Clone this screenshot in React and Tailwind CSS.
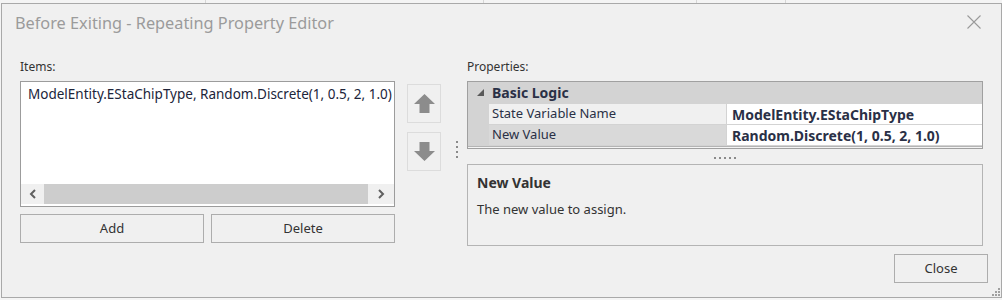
import React from 'react';

const font = { fontFamily: '"Noto Sans", "Open Sans", sans-serif' };

const UpArrow = () => (
  <svg width="21" height="19" viewBox="0 0 21 19">
    <path d="M10.5 0 L21 10 L15.5 10 L15.5 19 L5.5 19 L5.5 10 L0 10 Z" fill="#8c8c8c" />
  </svg>
);

const DownArrow = () => (
  <svg width="21" height="19" viewBox="0 0 21 19">
    <path d="M5.5 0 L15.5 0 L15.5 9 L21 9 L10.5 19 L0 9 L5.5 9 Z" fill="#8c8c8c" />
  </svg>
);

const Chevron = ({ dir }) => (
  <svg width="8" height="10" viewBox="0 0 8 10">
    <path
      d={dir === 'left' ? 'M6 1 L2 5 L6 9' : 'M2 1 L6 5 L2 9'}
      fill="none"
      stroke="#606060"
      strokeWidth="2"
    />
  </svg>
);

const Dots = ({ vertical, count }) => (
  <div className={`flex ${vertical ? 'flex-col gap-[3px]' : 'flex-row gap-[3px]'}`}>
    {Array.from({ length: count }).map((_, i) => (
      <div key={i} className="h-[2px] w-[2px] bg-[#8a8a8a]" />
    ))}
  </div>
);

const PropRow = ({ name, value, selected }) => (
  <div className="mt-[1px] flex h-[20px]">
    <div className="w-[21px]" />
    <div
      className={`flex w-[237px] items-center pl-[3px] text-[13px] text-[#2a3046] ${
        selected ? 'bg-[#d9d9d9]' : 'bg-[#f0f0f0]'
      }`}
    >
      {name}
    </div>
    <div className="ml-[1px] flex flex-1 items-center bg-white pl-[5px] text-[14px] font-bold text-[#2a3046]">
      {value}
    </div>
  </div>
);

export default function App() {
  return (
    <div className="h-[300px] w-[1002px] overflow-hidden bg-[#f4f4f4]" style={font}>
      {/* background behind the dialog */}
      <div className="flex h-[3px]">
        <div className="w-[206px] border-r border-[#d6d6d6]" />
        <div className="w-[278px] border-r border-[#d6d6d6]" />
        <div className="w-[213px] border-r border-[#d6d6d6]" />
        <div className="w-[89px] border-r border-[#d6d6d6]" />
      </div>

      <div className="relative ml-[1px] h-[295px] w-[1001px] border border-[#a9a9a9] bg-[#f0f0f0]">
        {/* Title bar */}
        <div className="flex h-[55px] items-start justify-between pl-[13px] pr-[20px] pt-[8px]">
          <span className="text-[16.3px] leading-[22px] text-[#9b9b9b]">
            Before Exiting - Repeating Property Editor
          </span>
          <svg className="mt-[3px]" width="14" height="14" viewBox="0 0 14 14">
            <path d="M0.5 0.5 L13.5 13.5 M13.5 0.5 L0.5 13.5" stroke="#9a9a9a" strokeWidth="1.1" />
          </svg>
        </div>

        {/* Body */}
        <div className="flex items-start pl-[18px]">
          {/* Items column */}
          <div className="flex w-[375px] flex-col">
            <div className="h-[16px] text-[12px] leading-[16px] text-[#333]">Items:</div>
            <div className="mt-[6px] flex h-[126px] flex-col border border-[#9c9c9c] bg-white">
              <div className="flex-1 pl-[7px] pt-[3px] text-[13.5px] leading-[18px] text-[#20243a]">
                ModelEntity.EStaChipType, Random.Discrete(1, 0.5, 2, 1.0)
              </div>
              <div className="mb-[2px] flex h-[20px] items-stretch">
                <div className="flex w-[23px] items-center justify-center bg-[#f0f0f0]">
                  <Chevron dir="left" />
                </div>
                <div className="w-[324px] bg-[#cdcdcd]" />
                <div className="flex flex-1 items-center justify-center bg-[#f0f0f0]">
                  <Chevron dir="right" />
                </div>
              </div>
            </div>
            <div className="mt-[7px] flex gap-[7px]">
              <button className="h-[29px] w-[184px] border border-[#adadad] bg-[#f0f0f0] text-[13px] text-[#333]">
                Add
              </button>
              <button className="h-[29px] w-[184px] border border-[#adadad] bg-[#f0f0f0] text-[13px] text-[#333]">
                Delete
              </button>
            </div>
          </div>

          {/* Move up / down */}
          <div className="flex w-[72px]">
            <div className="ml-[12px] flex flex-col pt-[25px]">
              <div className="flex h-[39px] w-[34px] items-center justify-center border border-[#dcdcdc]">
                <UpArrow />
              </div>
              <div className="mt-[9px] flex h-[39px] w-[34px] items-center justify-center border border-[#dcdcdc]">
                <DownArrow />
              </div>
            </div>
            <div className="ml-[15px] pt-[82px]">
              <Dots vertical count={4} />
            </div>
          </div>

          {/* Properties column */}
          <div className="flex w-[516px] flex-col">
            <div className="h-[16px] text-[12px] leading-[16px] text-[#333]">Properties:</div>
            <div className="mt-[6px] flex h-[68px] flex-col border border-[#a0a0a0] bg-[#d3d3d3]">
              <div className="flex h-[21px] items-center">
                <svg className="ml-[9px]" width="7" height="7" viewBox="0 0 7 7">
                  <path d="M7 0 L7 7 L0 7 Z" fill="#595959" />
                </svg>
                <span className="ml-[8px] text-[14px] font-bold text-[#2a3046]">Basic Logic</span>
              </div>
              <PropRow name="State Variable Name" value="ModelEntity.EStaChipType" />
              <PropRow name="New Value" value="Random.Discrete(1, 0.5, 2, 1.0)" selected />
              <div className="mt-[1px] h-[1px] bg-[#b4b4b4]" />
              <div className="h-[2px] bg-[#f4f4f4]" />
            </div>
            <div className="mt-[8px] flex justify-center">
              <Dots count={5} />
            </div>
            <div className="mt-[5px] h-[82px] border border-[#b4b4b4] pl-[9px] pt-[9px]">
              <div className="text-[14px] font-bold leading-[18px] text-[#333]">New Value</div>
              <div className="mt-[8px] text-[13px] leading-[18px] text-[#333]">The new value to assign.</div>
            </div>
          </div>
        </div>

        {/* Footer */}
        <div className="mt-[8px] flex justify-end pr-[13px]">
          <button className="h-[29px] w-[94px] border border-[#adadad] bg-[#f0f0f0] text-[13px] text-[#333]">
            Close
          </button>
        </div>

        {/* resize grip */}
        <svg className="absolute bottom-[1px] right-[1px]" width="8" height="8" viewBox="0 0 8 8">
          <rect x="6" y="0" width="2" height="2" fill="#a0a0a0" />
          <rect x="3" y="3" width="2" height="2" fill="#a0a0a0" />
          <rect x="6" y="3" width="2" height="2" fill="#a0a0a0" />
          <rect x="0" y="6" width="2" height="2" fill="#a0a0a0" />
          <rect x="3" y="6" width="2" height="2" fill="#a0a0a0" />
          <rect x="6" y="6" width="2" height="2" fill="#a0a0a0" />
        </svg>
      </div>
    </div>
  );
}
